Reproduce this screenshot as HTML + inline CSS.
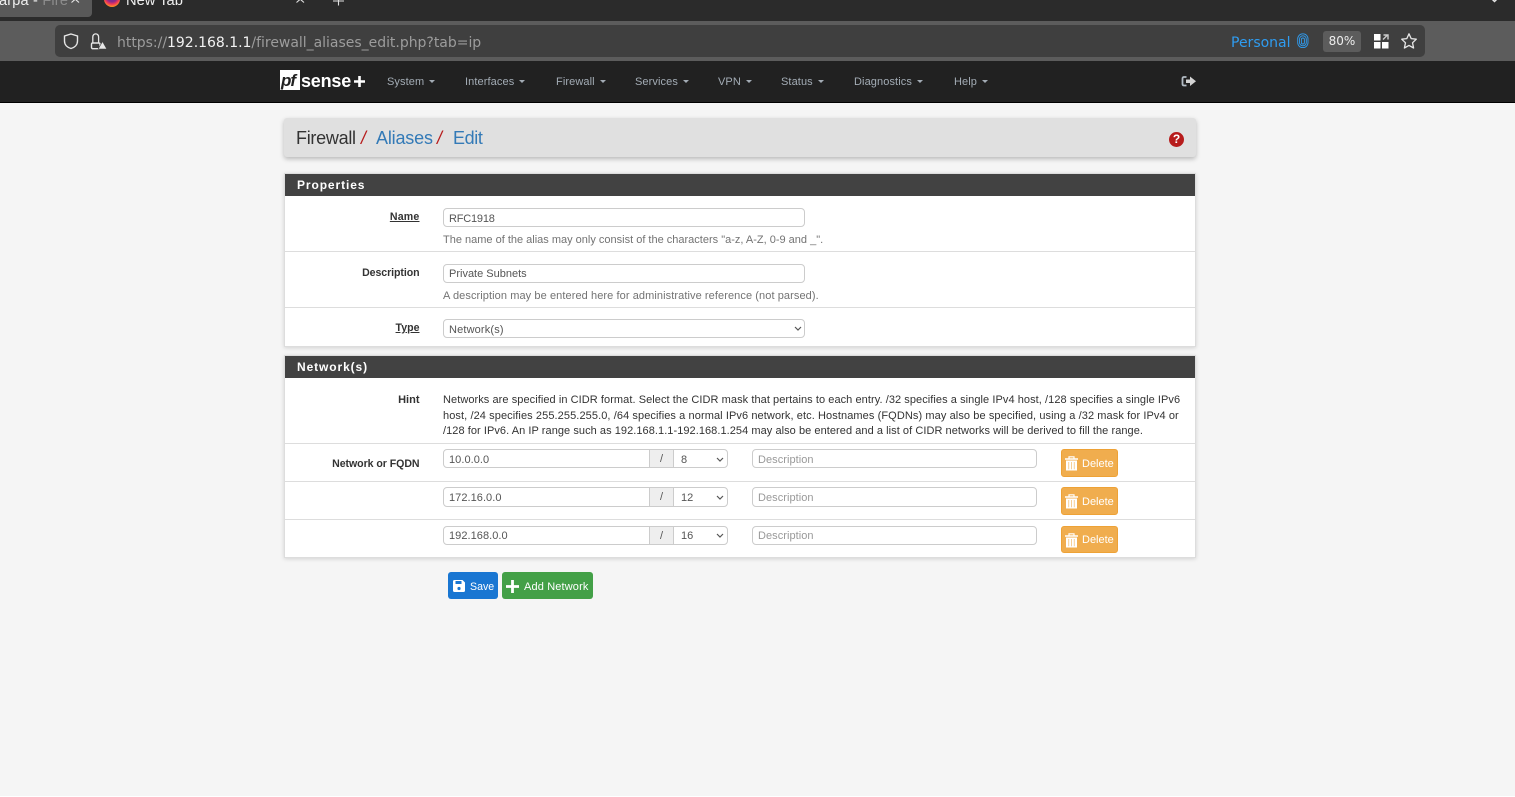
<!DOCTYPE html>
<html><head><meta charset="utf-8"><title>Firewall: Aliases: Edit</title>
<style>
html,body{margin:0;padding:0}
body{width:1515px;height:797px;overflow:hidden;position:relative;background:#f5f5f5;font-family:"Liberation Sans",sans-serif;font-size:11px;color:#333}
.a{position:absolute;white-space:nowrap}
.box{position:absolute;box-sizing:border-box;background:#fff;border:1px solid #ccc;border-radius:4px}
.t{position:absolute;white-space:nowrap;color:#555;font-size:11px;line-height:14px;margin-top:1px;letter-spacing:.05px}
.nav{position:absolute;white-space:nowrap;color:#a3acb5;font-size:11px;top:75px;line-height:14px;letter-spacing:.1px}
.nav:after{content:"";display:inline-block;margin-left:5px;vertical-align:2px;border-top:3px solid #a3acb5;border-left:3px solid transparent;border-right:3px solid transparent}
.lab{position:absolute;right:1095.5px;white-space:nowrap;font-weight:bold;font-size:10.6px;color:#333;line-height:14px;margin-top:1px}
.hr{position:absolute;left:285px;width:910px;height:1px;background:#ddd}
.head{position:absolute;left:285px;width:910px;height:22px;background:#424242;color:#fff;font-weight:bold;font-size:12px;letter-spacing:.9px;line-height:22px;text-indent:12px}
.panel{position:absolute;left:284px;width:912px;box-sizing:border-box;background:#fff;border:1px solid #ddd;box-shadow:0 1px 4px rgba(0,0,0,.14)}
.help{position:absolute;white-space:nowrap;color:#737373;font-size:11px;line-height:14px;left:443px;margin-top:1px}
.hint{position:absolute;white-space:nowrap;color:#333;font-size:11px;line-height:14px;left:443px;margin-top:1px;letter-spacing:.065px}
.addon{position:absolute;box-sizing:border-box;width:25px;height:19px;background:#eee;border:solid #ccc;border-width:1px 1px 1px 1px;text-align:center;color:#555;font-size:11px;line-height:18px}
.del{position:absolute;left:1061px;width:57px;height:28px;box-sizing:border-box;background:#f0ad4e;border:1px solid #eea236;border-radius:3px;color:#fff;font-size:11px;line-height:28px}
.del span{position:absolute;left:20px;top:0}
.del svg{position:absolute;left:3px;top:6px}
.ph{color:#999}
.chev{position:absolute}
</style></head><body>

<svg width="0" height="0" style="position:absolute"><defs>
<radialGradient id="ff" cx="50%" cy="35%" r="65%"><stop offset="0" stop-color="#6a2a9a"/><stop offset=".5" stop-color="#8a2a8a"/><stop offset=".72" stop-color="#f0345a"/><stop offset="1" stop-color="#ff9a20"/></radialGradient>
</defs></svg>

<!-- browser chrome -->
<div class="a" style="left:0;top:0;width:1515px;height:21px;background:#2b2b2b"></div>
<div class="a" style="left:0;top:-8px;width:92px;height:25px;background:#595959;border-radius:0 4px 4px 0"></div>
<div class="a" style="left:-1px;top:-7px;color:#f0f0f0;font-size:14.5px;line-height:16px;letter-spacing:.2px">arpa - <span style="color:#8c8c8c">Fire</span></div>
<svg class="a" style="left:70px;top:-4px" width="12" height="10"><path d="M1.5 0 L9 6.5 M9 0 L1.5 6.5" stroke="#e8e8e8" stroke-width="1.1"/></svg>
<svg class="a" style="left:104px;top:-9px" width="16" height="16"><circle cx="8" cy="8" r="8" fill="url(#ff)"/></svg>
<div class="a" style="left:126px;top:-7px;color:#f0f0f0;font-size:14.7px;line-height:16px">New Tab</div>
<svg class="a" style="left:295px;top:-4px" width="12" height="10"><path d="M1.5 0 L9 6.5 M9 0 L1.5 6.5" stroke="#e0e0e0" stroke-width="1.1"/></svg>
<svg class="a" style="left:332px;top:-4px" width="14" height="12"><path d="M6.500 0 V9.500 M1 5 H12" stroke="#e0e0e0" stroke-width="1.1"/></svg>
<svg class="a" style="left:1489px;top:-2px" width="12" height="6"><path d="M2 0 L5.500 3.500 L9 0" stroke="#e8e8e8" stroke-width="1.500" fill="none"/></svg>

<div class="a" style="left:0;top:21px;width:1515px;height:40px;background:#5c5c5c"></div>
<div class="a" style="left:55px;top:25px;width:1370px;height:32px;background:#3f3f3f;border-radius:5px"></div>
<svg class="a" style="left:62px;top:32px" width="18" height="18" viewBox="0 0 18 18"><path d="M9 2 L15.500 4 V9 C15.500 13 12.500 15.500 9 16.500 C5.500 15.500 2.500 13 2.500 9 V4 Z" fill="none" stroke="#e6e6e6" stroke-width="1.400"/></svg>
<svg class="a" style="left:90px;top:33px" width="17" height="17" viewBox="0 0 17 17"><path d="M2.800 10 V4 C2.800 -.2 8.600 -.2 8.600 4 V10" fill="none" stroke="#e6e6e6" stroke-width="1.300"/><rect x="1.500" y="10" width="8.500" height="5.700" rx="1.300" fill="none" stroke="#e6e6e6" stroke-width="1.400"/><path d="M12.500 8.500 L16.800 16 H8.200 Z" fill="#e6e6e6" stroke="#3f3f3f" stroke-width=".6"/></svg>
<div class="a" style="left:117px;top:33px;font-family:'DejaVu Sans',sans-serif;font-size:14px;line-height:20px;color:#9c9c9c;letter-spacing:-.02px">https://<span style="color:#f2f2f2">192.168.1.1</span>/firewall_aliases_edit.php?tab=ip</div>
<div class="a" style="left:1231px;top:33px;font-family:'DejaVu Sans',sans-serif;font-size:14px;line-height:20px;color:#2f9cf0">Personal</div>
<svg class="a" style="left:1297px;top:33px" width="12" height="16" viewBox="0 0 12 16" fill="none" stroke="#2f9cf0" stroke-width=".9"><rect x=".7" y=".8" width="10.300" height="13.800" rx="5"/><rect x="2.500" y="2.800" width="6.800" height="10" rx="3.300"/><rect x="4.400" y="5" width="3" height="6" rx="1.500"/></svg>
<div class="a" style="left:1323px;top:31px;width:38px;height:21px;background:#5c5c5c;border-radius:3px;text-align:center;font-family:'DejaVu Sans',sans-serif;font-size:12px;line-height:21px;color:#eee">80%</div>
<svg class="a" style="left:1374px;top:34px" width="15" height="15" viewBox="0 0 15 15"><rect width="6.500" height="6.500" fill="#fff"/><rect y="8" width="6.500" height="6.500" fill="#fff"/><rect x="8" y="8" width="6.500" height="6.500" fill="#fff"/><path d="M9 5.500 L13.500 1 M9.500 1 H14 V5.500" stroke="#ccc" stroke-width="1.400" fill="none"/></svg>
<svg class="a" style="left:1400px;top:32px" width="18" height="18" viewBox="0 0 18 18"><path d="M9 1.800 L11.200 6.600 L16.300 7.200 L12.500 10.800 L13.600 16 L9 13.400 L4.400 16 L5.500 10.800 L1.700 7.200 L6.800 6.600 Z" fill="none" stroke="#e6e6e6" stroke-width="1.300" stroke-linejoin="round"/></svg>

<!-- navbar -->
<div class="a" style="left:0;top:61px;width:1515px;height:41px;background:#212121"></div>
<div class="a" style="left:0;top:102px;width:1515px;height:1px;background:#000"></div>
<div class="a" style="left:280px;top:70px;width:20px;height:20px;background:#fff"></div>
<div class="a" style="left:281px;top:72px;font-weight:bold;font-style:italic;font-size:17px;line-height:18px;color:#212121;letter-spacing:-1px">pf</div>
<div class="a" style="left:301px;top:71px;font-weight:bold;font-size:18px;line-height:21px;color:#fff;letter-spacing:-.2px">sense</div>
<svg class="a" style="left:354px;top:76px" width="11" height="11"><path d="M5.500 0 V11 M0 5.500 H11" stroke="#fff" stroke-width="2.600"/></svg>
<div class="nav" style="left:387px">System</div>
<div class="nav" style="left:465px">Interfaces</div>
<div class="nav" style="left:556px">Firewall</div>
<div class="nav" style="left:635px">Services</div>
<div class="nav" style="left:718px">VPN</div>
<div class="nav" style="left:781px">Status</div>
<div class="nav" style="left:854px">Diagnostics</div>
<div class="nav" style="left:954px">Help</div>
<svg class="a" style="left:1181px;top:75px" width="16" height="13" viewBox="0 0 16 13"><path d="M5.500 2 H3 C2 2 1.500 2.500 1.500 3.500 V9 C1.500 10 2 10.500 3 10.500 H5.500" fill="none" stroke="#b3bcc5" stroke-width="1.800"/><path d="M5 4.500 H9 V1.500 L15 6.300 L9 11 V8 H5 Z" fill="#d4d4d4"/></svg>

<!-- breadcrumb -->
<div class="a" style="left:284px;top:118px;width:912px;height:39px;background:#e0e0e0;border-radius:3px;box-shadow:0 2px 5px rgba(0,0,0,.25)"></div>
<div class="a" style="left:296px;top:127px;font-size:18px;line-height:22px;color:#333;letter-spacing:-.28px">Firewall</div>
<div class="a" style="left:361px;top:127px;font-size:18px;line-height:22px;color:#b71c1c;font-style:italic">/</div>
<div class="a" style="left:376px;top:127px;font-size:18px;line-height:22px;color:#337ab7;letter-spacing:-.18px">Aliases</div>
<div class="a" style="left:437px;top:127px;font-size:18px;line-height:22px;color:#b71c1c;font-style:italic">/</div>
<div class="a" style="left:453px;top:127px;font-size:18px;line-height:22px;color:#337ab7;letter-spacing:-.4px">Edit</div>
<div class="a" style="left:1169px;top:132px;width:15px;height:15px;border-radius:50%;background:#b71c1c;color:#fff;text-align:center;font-weight:bold;font-size:12px;line-height:15px">?</div>

<!-- Properties panel -->
<div class="panel" style="top:173px;height:174px"></div>
<div class="head" style="top:174px">Properties</div>
<div class="hr" style="top:251px"></div>
<div class="hr" style="top:307px"></div>

<div class="lab" style="top:209px;text-decoration:underline;letter-spacing:.2px">Name</div>
<div class="box" style="left:443px;top:208px;width:362px;height:19px"></div>
<div class="t" style="left:449px;top:211px;letter-spacing:-.2px">RFC1918</div>
<div class="help" style="top:232px">The name of the alias may only consist of the characters "a-z, A-Z, 0-9 and _".</div>

<div class="lab" style="top:265px;letter-spacing:-.08px">Description</div>
<div class="box" style="left:443px;top:264px;width:362px;height:19px"></div>
<div class="t" style="left:449px;top:266px;letter-spacing:0">Private Subnets</div>
<div class="help" style="top:288px;letter-spacing:.085px">A description may be entered here for administrative reference (not parsed).</div>

<div class="lab" style="top:320px;text-decoration:underline">Type</div>
<div class="box" style="left:443px;top:319px;width:362px;height:19px"></div>
<div class="t" style="left:449px;top:322px;letter-spacing:.15px">Network(s)</div>
<svg class="chev" style="left:794px;top:326px" width="9" height="6"><path d="M1 1 L4 4 L7 1" stroke="#555" stroke-width="1.200" fill="none"/></svg>

<!-- Networks panel -->
<div class="panel" style="top:355px;height:203px"></div>
<div class="head" style="top:356px">Network(s)</div>
<div class="hr" style="top:443px"></div>
<div class="hr" style="top:481px"></div>
<div class="hr" style="top:519px"></div>

<div class="lab" style="top:392px;font-size:11px">Hint</div>
<div class="hint" style="top:392px">Networks are specified in CIDR format. Select the CIDR mask that pertains to each entry. /32 specifies a single IPv4 host, /128 specifies a single IPv6</div>
<div class="hint" style="top:408px;letter-spacing:.09px">host, /24 specifies 255.255.255.0, /64 specifies a normal IPv6 network, etc. Hostnames (FQDNs) may also be specified, using a /32 mask for IPv4 or</div>
<div class="hint" style="top:423px;letter-spacing:.056px">/128 for IPv6. An IP range such as 192.168.1.1-192.168.1.254 may also be entered and a list of CIDR networks will be derived to fill the range.</div>

<div class="lab" style="top:456px;letter-spacing:-.06px">Network or FQDN</div>

<!-- row 1 -->
<div class="box" style="left:443px;top:449px;width:285px;height:19px"></div>
<div class="addon" style="left:649px;top:449px">/</div>
<div class="t" style="left:449px;top:452px">10.0.0.0</div>
<div class="t" style="left:681px;top:452px">8</div>
<svg class="chev" style="left:716px;top:457px" width="9" height="6"><path d="M1 1 L4 4 L7 1" stroke="#555" stroke-width="1.200" fill="none"/></svg>
<div class="box" style="left:752px;top:449px;width:285px;height:19px"></div>
<div class="t ph" style="left:758px;top:452px">Description</div>
<div class="del" style="top:449px"><svg width="13" height="15" viewBox="0 0 13 15"><path d="M0 3 H13" stroke="#fff" stroke-width="1.500"/><path d="M4 2.500 V.8 H9 V2.500" stroke="#fff" stroke-width="1.200" fill="none"/><rect x="1" y="4.500" width="11" height="10" fill="#fff"/><path d="M3.700 6 V13.200 M6.500 6 V13.200 M9.300 6 V13.200" stroke="#f6cf96" stroke-width="1"/></svg><span>Delete</span></div>

<!-- row 2 -->
<div class="box" style="left:443px;top:487px;width:285px;height:20px"></div>
<div class="addon" style="left:649px;top:487px;height:20px">/</div>
<div class="t" style="left:449px;top:490px">172.16.0.0</div>
<div class="t" style="left:681px;top:490px">12</div>
<svg class="chev" style="left:716px;top:495px" width="9" height="6"><path d="M1 1 L4 4 L7 1" stroke="#555" stroke-width="1.200" fill="none"/></svg>
<div class="box" style="left:752px;top:487px;width:285px;height:20px"></div>
<div class="t ph" style="left:758px;top:490px">Description</div>
<div class="del" style="top:487px"><svg width="13" height="15" viewBox="0 0 13 15"><path d="M0 3 H13" stroke="#fff" stroke-width="1.500"/><path d="M4 2.500 V.8 H9 V2.500" stroke="#fff" stroke-width="1.200" fill="none"/><rect x="1" y="4.500" width="11" height="10" fill="#fff"/><path d="M3.700 6 V13.200 M6.500 6 V13.200 M9.300 6 V13.200" stroke="#f6cf96" stroke-width="1"/></svg><span>Delete</span></div>

<!-- row 3 -->
<div class="box" style="left:443px;top:526px;width:285px;height:19px"></div>
<div class="addon" style="left:649px;top:526px">/</div>
<div class="t" style="left:449px;top:528px">192.168.0.0</div>
<div class="t" style="left:681px;top:528px">16</div>
<svg class="chev" style="left:716px;top:533px" width="9" height="6"><path d="M1 1 L4 4 L7 1" stroke="#555" stroke-width="1.200" fill="none"/></svg>
<div class="box" style="left:752px;top:526px;width:285px;height:19px"></div>
<div class="t ph" style="left:758px;top:528px">Description</div>
<div class="del" style="top:526px;height:27px;line-height:27px"><svg width="13" height="15" viewBox="0 0 13 15"><path d="M0 3 H13" stroke="#fff" stroke-width="1.500"/><path d="M4 2.500 V.8 H9 V2.500" stroke="#fff" stroke-width="1.200" fill="none"/><rect x="1" y="4.500" width="11" height="10" fill="#fff"/><path d="M3.700 6 V13.200 M6.500 6 V13.200 M9.300 6 V13.200" stroke="#f6cf96" stroke-width="1"/></svg><span>Delete</span></div>

<!-- buttons -->
<div class="a" style="left:448px;top:572px;width:50px;height:27px;background:#1976d2;border-radius:3px"></div>
<svg class="a" style="left:452px;top:579px" width="14" height="14" viewBox="0 0 14 14"><path d="M1 2.500 C1 1.500 1.500 1 2.500 1 H10.500 L13 3.500 V11.500 C13 12.500 12.500 13 11.500 13 H2.500 C1.500 13 1 12.500 1 11.500 Z" fill="#fff"/><rect x="3.500" y="2" width="6" height="3" fill="#1976d2"/><circle cx="7" cy="9.500" r="1.600" fill="#1976d2"/></svg>
<div class="a" style="left:470px;top:580px;color:#fff;font-size:10.6px;line-height:14px">Save</div>
<div class="a" style="left:502px;top:572px;width:91px;height:27px;background:#43a047;border-radius:3px"></div>
<svg class="a" style="left:506px;top:580px" width="13" height="13"><path d="M6.500 0 V13 M0 6.500 H13" stroke="#fff" stroke-width="2.800"/></svg>
<div class="a" style="left:524px;top:580px;color:#fff;font-size:11px;line-height:14px;letter-spacing:.14px">Add Network</div>

<div class="a" style="left:0;top:796px;width:1515px;height:1px;background:#fff"></div>
</body></html>
